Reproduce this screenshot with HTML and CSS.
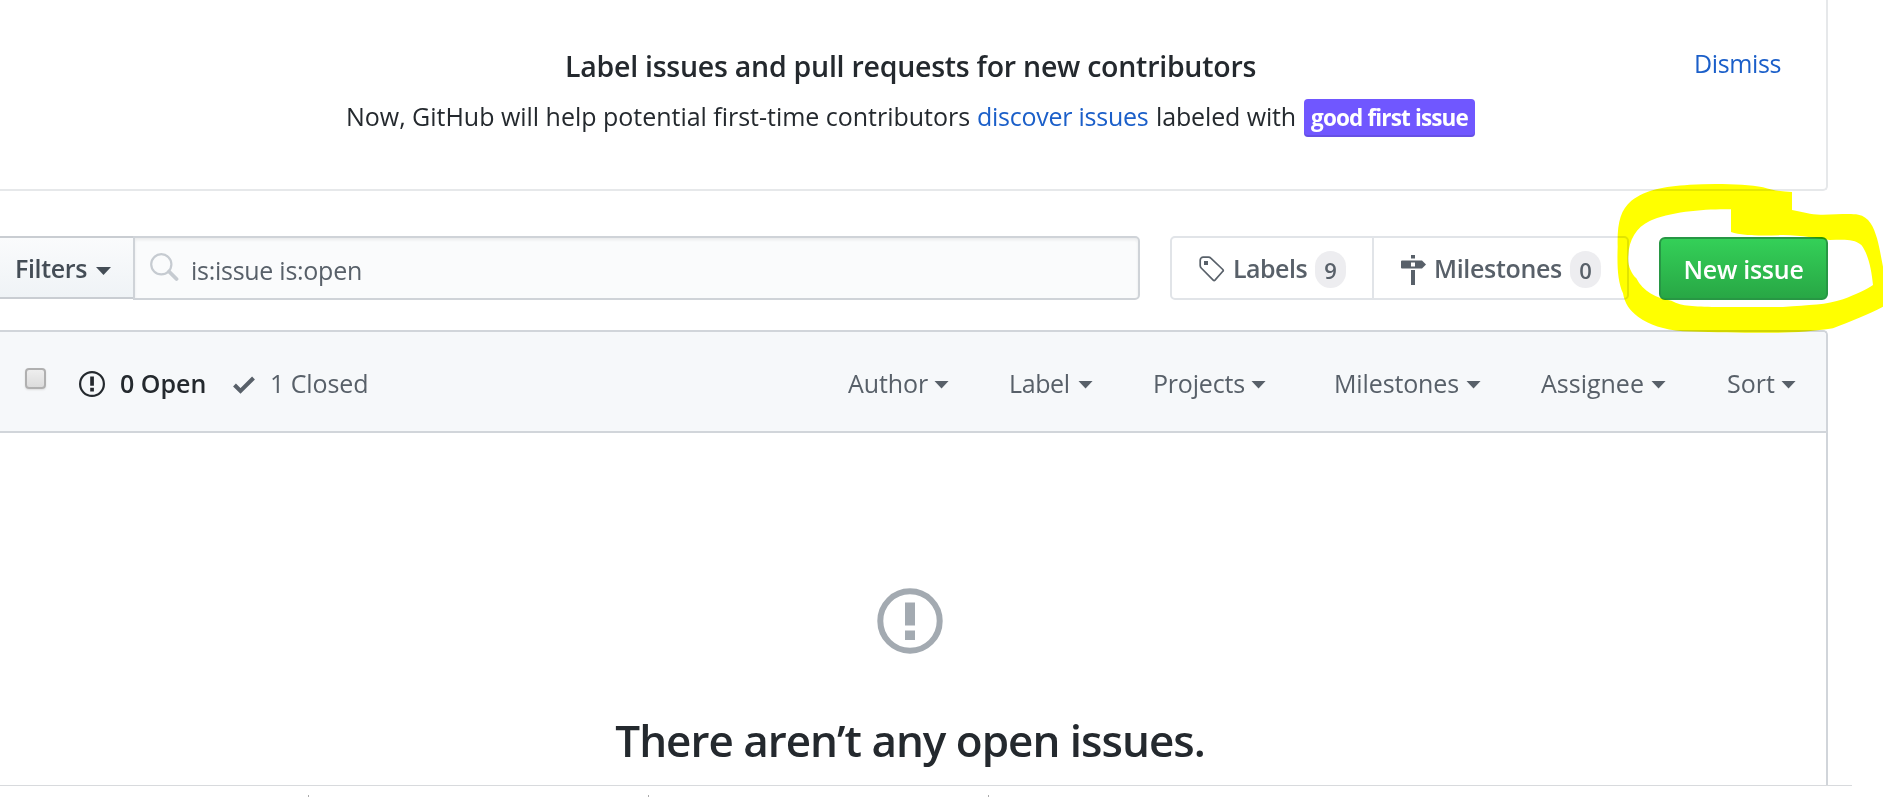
FILE: index.html
```
<!DOCTYPE html>
<html lang="en">
<head>
<meta charset="utf-8">
<title>Issues</title>
<link rel="stylesheet" href="styles.css">
</head>
<body>
<main class="page">
  <section class="banner">
    <div class="banner-main">
      <h3 class="banner-title">Label issues and pull requests for new contributors</h3>
      <p class="banner-text">
        <span class="intro">Now, GitHub will help potential first-time contributors</span>
        <a class="discover">discover issues</a>
        <span class="with">labeled with</span>
        <span class="label">good first issue</span>
      </p>
    </div>
    <a class="dismiss">Dismiss</a>
  </section>

  <div class="toolbar">
    <button class="filters"><span>Filters</span><i class="caret"></i></button>
    <div class="search">
      <svg class="search-icon" width="29" height="29" viewBox="0 0 29 29" fill="none" stroke="#c6cbd1"><circle cx="11.3" cy="11.3" r="10.1" stroke-width="2.2"/><path d="M19 18.5l7.5 7.5" stroke-width="3.8" stroke-linecap="round"/></svg>
      <span class="query">is:issue is:open</span>
    </div>
    <nav class="subnav">
      <a class="subnav-item labels">
        <svg width="26" height="26" viewBox="0 0 26 26"><path d="M1.2 9.5V4.2a3 3 0 0 1 3-3H9.500q1.300 0 2.300 1L23.800 13.500q.9.900 0 1.800L16 24.100q-.9.900-1.800 0L2.200 12q-1-1-1-2.500z" fill="none" stroke="#586069" stroke-width="1.700"/><path d="M5 5h4v4H5z" fill="#586069"/></svg>
        <span class="name">Labels</span><span class="counter">9</span>
      </a>
      <a class="subnav-item milestones">
        <svg width="26" height="30" viewBox="0 0 26 30" fill="#586069"><path d="M10 0h4v3.500h-4zM10 15h4v15h-4z"/><path fill-rule="evenodd" d="M1 5.500h20l4 4-4 4H1q-1 0-1-1v-6q0-1 1-1zM10 7.500v4h4v-4z"/></svg>
        <span class="name">Milestones</span><span class="counter">0</span>
      </a>
    </nav>
    <button class="new-issue">New issue</button>
    <svg class="highlight" width="300" height="180" viewBox="0 0 900 540"><path fill="#ff0" d="M627 66V120C660 126 690 136 720 134C760 134 800 130 826 134C858 140 872 170 882 205C890 235 894 260 900 290V410C860 432 800 455 750 475C690 484 620 490 560 488C480 490 380 486 300 484C240 478 200 465 165 440C140 422 125 400 120 370C104 335 102 290 104 230C102 160 112 120 145 92C190 58 240 50 320 44C400 40 490 42 540 52C570 62 600 65 627 66ZM444 118C380 116 260 124 200 153C160 172 138 210 136 255C132 285 145 310 160 325C180 365 220 385 265 392C300 410 330 408 400 411H600C680 405 730 405 780 388C820 372 850 360 870 345C866 300 855 250 835 225C810 205 780 210 740 210C700 205 660 196 600 195C540 198 480 198 444 186Z" fill-rule="evenodd"/></svg>
  </div>

  <section class="issues">
    <header class="issues-head">
      <span class="check"></span>
      <svg class="open-icon" width="26" height="26" viewBox="0 0 26 26"><circle cx="13" cy="13" r="11.900" fill="none" stroke="#24292e" stroke-width="2.200"/><path d="M11.200 5.500h3.700v9.300h-3.700zM11.200 16.800h3.700v3.700h-3.700z" fill="#24292e"/></svg>
      <span class="open">0 Open</span>
      <svg class="closed-icon" width="22" height="18" viewBox="0 0 22 18"><path d="M1.500 9l6 6L20.500 2" fill="none" stroke="#586069" stroke-width="4"/></svg>
      <span class="closed">1 Closed</span>
      <div class="menus">
        <a class="menu author"><span>Author</span><i class="caret"></i></a>
        <a class="menu lab"><span>Label</span><i class="caret"></i></a>
        <a class="menu projects"><span>Projects</span><i class="caret"></i></a>
        <a class="menu miles"><span>Milestones</span><i class="caret"></i></a>
        <a class="menu assignee"><span>Assignee</span><i class="caret"></i></a>
        <a class="menu sort"><span>Sort</span><i class="caret"></i></a>
      </div>
    </header>
    <div class="blank">
      <svg width="66" height="66" viewBox="0 0 66 66"><circle cx="33" cy="33" r="29.700" fill="none" stroke="#a3aab1" stroke-width="6"/><path d="M28 14.500h10v23H28zM28 42.500h10v9.500H28z" fill="#a3aab1"/></svg>
      <h2 class="blank-title">There aren’t any open issues.</h2>
    </div>
  </section>
  <footer class="cut"><i></i><i></i><i></i></footer>
</main>
</body>
</html>
```
FILE: styles.css
```
* { box-sizing: border-box; }
body { margin: 0; background: #fff; }
.page {
  width: 1883px; height: 797px; overflow: hidden;
  display: flex; flex-direction: column;
  font: 25px/40px "Open Sans", "Noto Sans", sans-serif;
  color: #24292e; white-space: nowrap;
}
h2, h3, p { margin: 0; }
svg { display: block; flex: none; }
button { font: inherit; white-space: nowrap; }

.banner {
  display: flex; flex: none; width: 1828px; height: 191px;
  border: solid #e6e8ea; border-width: 0 2px 2px 0; border-radius: 0 0 5px 0;
}
.banner-main { width: 1694px; padding-top: 46px; }
.banner-title { padding-left: 565px; font-size: 28.5px; font-weight: 600; letter-spacing: -.25px; }
.banner-text { display: flex; align-items: center; padding: 9px 0 0 346px; }
.intro { width: 631px; letter-spacing: -.02px; }
.discover { width: 179px; color: #1b5fc9; letter-spacing: -.25px; }
.with { width: 148px; letter-spacing: -.13px; }
.label {
  width: 171px; height: 38px; margin-top: 4px; border-radius: 4px;
  background: #7057ff; box-shadow: inset 0 -2px rgba(27,31,35,.12);
  color: #fff; font-size: 22.5px; font-weight: 700; line-height: 38px;
  letter-spacing: -.85px; text-align: center;
}
.dismiss { margin-top: 43px; color: #1b5fc9; letter-spacing: -.38px; }

.toolbar { position: relative; display: flex; flex: none; align-items: flex-start; height: 94px; margin-top: 45px; }
.caret { flex: none; width: 15px; height: 8px; background: currentColor; clip-path: polygon(0 0, 100% 0, 50% 100%); }
.filters {
  display: flex; align-items: center; justify-content: flex-start; width: 133px; height: 63px; padding: 0 0 0 15px;
  border: solid #c9cdd2; border-width: 2px 0; color: #444d56;
  background: linear-gradient(#fafbfc, #eff3f6); font-weight: 600; letter-spacing: -.36px; text-align: left;
}
.filters span { width: 81px; }
.filters .caret { margin-top: 7px; }
.search {
  display: flex; width: 1007px; height: 64px; padding: 15px 0 0 15px;
  border: 2px solid #cfd3d8; border-radius: 0 5px 5px 0;
  background: #fafbfc; box-shadow: inset 0 2px 3px rgba(27,31,35,.07);
}
.query { margin: -3px 0 0 12px; color: #586069; letter-spacing: -.27px; }
.subnav { display: flex; margin-left: 30px; width: 459px; height: 64px; border: 2px solid #e1e4e8; border-radius: 5px; color: #586069; font-weight: 600; }
.subnav-item { display: flex; align-items: flex-start; padding-top: 10px; }
.labels { width: 202px; padding-left: 27px; border-right: 2px solid #e1e4e8; }
.labels svg { margin-top: 8px; }
.labels .name { width: 82px; margin-left: 8px; letter-spacing: -.53px; }
.milestones { padding-left: 27px; }
.milestones svg { margin-top: 7px; }
.milestones .name { width: 136px; margin-left: 7px; letter-spacing: -.32px; }
.counter { width: 31px; height: 37px; margin-top: 3px; border-radius: 16px; background: #ededf0; font-size: 22px; font-weight: 600; line-height: 39px; text-align: center; }
.new-issue {
  width: 169px; height: 63px; margin: 1px 0 0 30px; padding: 0;
  border: 2px solid #279744; border-radius: 6px;
  background: linear-gradient(#34d058, #28a745);
  color: #fff; font-weight: 600; letter-spacing: -.27px; line-height: 56px;
}
.highlight { position: absolute; left: 1583px; top: -66px; mix-blend-mode: multiply; }

.issues { flex: none; width: 1828px; height: 455px; border: solid #d1d5da; border-width: 2px 2px 0 0; border-radius: 0 5px 0 0; }
.issues-head { display: flex; align-items: flex-start; height: 101px; padding: 31px 0 0 25px; border-bottom: 2px solid #d1d5da; background: #f6f8fa; border-radius: 0 4px 0 0; color: #586069; }
.check { width: 21px; height: 21px; margin-top: 5px; border: 2px solid #b0b0b0; border-radius: 4px; background: linear-gradient(#eee, #dcdcdc); box-shadow: 0 1px 2px #ddd; }
.open-icon { margin: 8px 0 0 33px; }
.open { width: 97px; margin-left: 15px; color: #24292e; font-weight: 600; }
.closed-icon { margin: 13px 0 0 16px; }
.closed { width: 120px; margin-left: 15px; letter-spacing: -.08px; }
.menus { display: flex; margin-left: 458px; }
.menu { display: flex; align-items: center; }
.menu .caret { margin-top: 3px; }
.author span { width: 86px; letter-spacing: -.1px; }
.lab { margin-left: 60px; }
.lab span { width: 69px; letter-spacing: -.4px; }
.projects { margin-left: 60px; }
.projects span { width: 98px; letter-spacing: -.2px; }
.miles { margin-left: 68px; }
.miles span { width: 132px; letter-spacing: -.13px; }
.assignee { margin-left: 60px; }
.assignee span { width: 110px; }
.sort { margin-left: 61px; }
.sort span { width: 54px; }

.blank { display: flex; flex-direction: column; align-items: center; padding: 155px 6px 0 0; }
.blank-title { margin-top: 56px; font-size: 44px; line-height: 60px; font-weight: 600; letter-spacing: -1px; }
.cut { display: flex; flex: none; align-items: flex-end; width: 1852px; height: 12px; border-top: 1px solid #d8dadd; }
.cut i { width: 1px; height: 2px; margin-left: 308px; background: #aaa; }
.cut i + i { margin-left: 339px; }
```
